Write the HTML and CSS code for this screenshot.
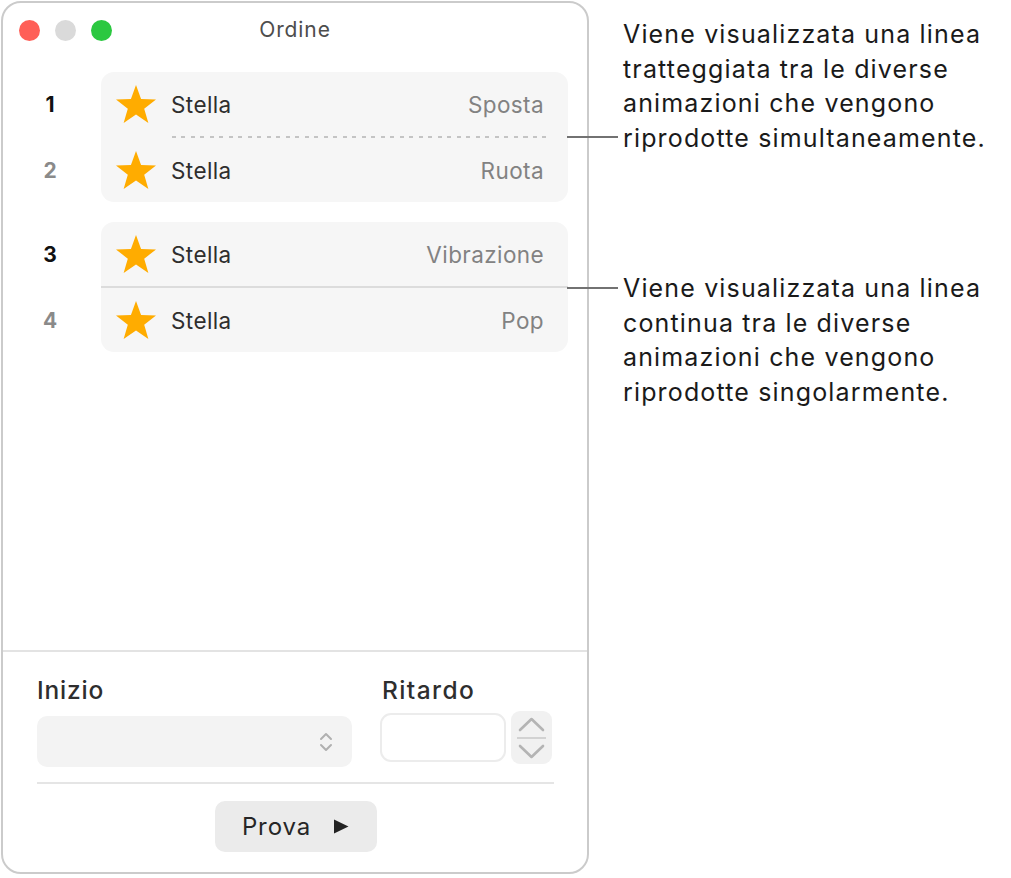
FILE: index.html
```html
<!doctype html>
<html lang="it">
<head>
<meta charset="utf-8">
<title>Ordine</title>
<meta name="viewport" content="width=device-width,initial-scale=1">
<link rel="stylesheet" href="styles.css">
</head>
<body>
<div class="page">
  <div class="window">
    <div class="titlebar">
      <div class="lights"><i class="l-red"></i><i class="l-gray"></i><i class="l-green"></i></div>
      <div class="title">Ordine</div>
      <div></div>
    </div>

    <div class="list">
      <div class="seq">
        <div class="nums"><span class="on">1</span><span>2</span></div>
        <div class="group">
          <div class="row">
            <svg class="star" viewBox="0.98 1 38.04 36.18" preserveAspectRatio="none"><polygon points="20,1 24.82,14.37 39.02,14.82 27.8,23.53 31.76,37.18 20,29.2 8.24,37.18 12.2,23.53 0.98,14.82 15.18,14.37"/></svg>
            <span class="name">Stella</span><span class="anim">Sposta</span>
          </div>
          <div class="sep dashed"></div>
          <div class="row">
            <svg class="star" viewBox="0.98 1 38.04 36.18" preserveAspectRatio="none"><polygon points="20,1 24.82,14.37 39.02,14.82 27.8,23.53 31.76,37.18 20,29.2 8.24,37.18 12.2,23.53 0.98,14.82 15.18,14.37"/></svg>
            <span class="name">Stella</span><span class="anim">Ruota</span>
          </div>
        </div>
      </div>

      <div class="seq">
        <div class="nums"><span class="on">3</span><span>4</span></div>
        <div class="group">
          <div class="row">
            <svg class="star" viewBox="0.98 1 38.04 36.18" preserveAspectRatio="none"><polygon points="20,1 24.82,14.37 39.02,14.82 27.8,23.53 31.76,37.18 20,29.2 8.24,37.18 12.2,23.53 0.98,14.82 15.18,14.37"/></svg>
            <span class="name">Stella</span><span class="anim">Vibrazione</span>
          </div>
          <div class="sep solid"></div>
          <div class="row">
            <svg class="star" viewBox="0.98 1 38.04 36.18" preserveAspectRatio="none"><polygon points="20,1 24.82,14.37 39.02,14.82 27.8,23.53 31.76,37.18 20,29.2 8.24,37.18 12.2,23.53 0.98,14.82 15.18,14.37"/></svg>
            <span class="name">Stella</span><span class="anim">Pop</span>
          </div>
        </div>
      </div>
    </div>

    <div class="panel">
      <div class="fields">
        <div class="field start">
          <label>Inizio</label>
          <div class="select">
            <svg width="14" height="24" viewBox="0 0 14 24"><path d="M2 9 L7 4 L12 9 M2 15 L7 20 L12 15" fill="none" stroke="#b0b0b0" stroke-width="2" stroke-linecap="round" stroke-linejoin="round"/></svg>
          </div>
        </div>
        <div class="field delay">
          <label>Ritardo</label>
          <div class="delay-row">
            <div class="input"></div>
            <div class="stepper">
              <svg width="41" height="53" viewBox="0 0 41 53"><path d="M9 19 L20.5 8 L32 19 M9 35 L20.5 46 L32 35" fill="none" stroke="#b4b4b4" stroke-width="2.6" stroke-linecap="round" stroke-linejoin="round"/><path d="M6 27 H35" stroke="#d2d2d2" stroke-width="2"/></svg>
            </div>
          </div>
        </div>
      </div>
      <div class="divider"></div>
      <div class="actions">
        <button class="play">Prova <svg width="16" height="15" viewBox="0 0 16 15"><path d="M1 0.5 L15.5 7.5 L1 14.5 Z" fill="#222"/></svg></button>
      </div>
    </div>
  </div>

  <div class="notes">
    <p class="note note-dash">Viene visualizzata una linea tratteggiata tra le diverse animazioni che vengono riprodotte simultaneamente.</p>
    <p class="note note-solid">Viene visualizzata una linea continua tra le diverse animazioni che vengono riprodotte singolarmente.</p>
  </div>
</div>
</body>
</html>
```

FILE: styles.css
```css
:root{
  --line:#cbcbcb;--group:#f6f6f6;--sub:#828282;--text:#2b2b2b;--star:#ffac00
}
*{box-sizing:border-box;margin:0;padding:0}
body{background:#fff;font-family:Inter,"Noto Sans",sans-serif;color:var(--text)}
.page{display:flex;align-items:flex-start;padding:1px 0 0 1px}

.window{width:588px;height:873px;border:2px solid var(--line);border-radius:20px;display:flex;flex-direction:column;flex-shrink:0}

.titlebar{height:54px;display:grid;grid-template-columns:1fr auto 1fr;align-items:center}
.lights{display:flex;gap:15px;padding-left:16px}
.lights i{width:21px;height:21px;border-radius:50%;display:block}
.l-red{background:#ff5f57}
.l-gray{background:#dadada}
.l-green{background:#2bc840}
.title{font-size:21px;letter-spacing:.9px;color:#4d4d4d;margin-top:-1px}

.list{padding:15px 19px 0 34px;display:flex;flex-direction:column;gap:20px}
.seq{display:flex;gap:38px}
.nums{width:26px;display:flex;flex-direction:column;gap:2px}
.nums span{height:64px;display:flex;align-items:center;justify-content:center;font-size:21px;font-weight:700;color:#8a8a8a}
.nums span.on{color:#111}
.group{flex:1;background:var(--group);border-radius:13px}
.row{height:64px;display:flex;align-items:center;padding:0 24px 0 15px}
.star{width:40px;height:38px;fill:var(--star);margin-right:15px;flex-shrink:0}
.name{font-size:22.5px;letter-spacing:.4px;color:#2e2e2e;flex:1;padding-top:1px}
.anim{font-size:22.5px;letter-spacing:.4px;color:var(--sub);padding-top:1px}
.sep{height:2px}
.sep.dashed{margin:0 22px 0 71px;background:repeating-linear-gradient(90deg,#c4c4c4 0 4px,transparent 4px 9.5px)}
.sep.solid{background:#dcdcdc}

.panel{margin-top:auto;border-top:2px solid #e3e3e3;padding:24px 33px 0 34px;height:222px}
.fields{display:flex;gap:28px}
.field label{display:block;font-size:24.5px;font-weight:500;letter-spacing:.8px;color:#2e2e2e;line-height:28px}
.start{width:315px}
.delay label{letter-spacing:1.4px;padding-left:2px}
.select{margin-top:12px;height:51px;background:#f3f3f3;border-radius:10px;display:flex;align-items:center;justify-content:flex-end;padding-right:19px}
.delay{flex:1}
.delay-row{display:flex;gap:5px;margin-top:7px;align-items:center}
.input{width:126px;height:49px;border:2px solid #ececec;border-radius:11px;background:#fff}
.stepper{width:41px;height:53px;background:#f1f1f1;border-radius:9px}
.stepper svg{display:block}
.divider{height:2px;background:#e5e5e5;margin-top:15px}
.actions{display:flex;justify-content:center;padding-top:17px}
.play{width:162px;height:51px;border:none;border-radius:10px;background:#ebebeb;font-family:inherit;font-size:24px;letter-spacing:.9px;color:#262626;display:flex;align-items:center;justify-content:center;gap:22px}

.notes{margin-left:34px;padding-top:16px;color:#1a1a1a}
.note{position:relative;font-size:25px;letter-spacing:1.15px;line-height:34.5px;width:385px}
.note-solid{margin-top:116px}
.note::before{content:"";position:absolute;left:-56px;width:51px;height:2px;background:#727272}
.note-dash::before{top:119px}
.note-solid::before{top:16px}
```
